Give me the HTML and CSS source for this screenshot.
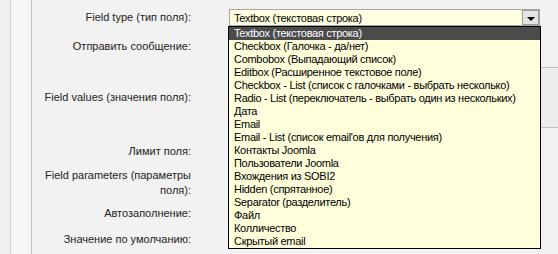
FILE: index.html
```html
<!DOCTYPE html>
<html lang="ru">
<head>
    <meta charset="UTF-8">
    <title>Field settings</title>
    <link rel="stylesheet" href="styles.css">
</head>
<body>
    <div class="page">
        <div class="gutter"></div>
        <div class="strip"></div>

        <!-- Field settings form -->
        <div class="form">
            <div class="row row-type">
                <div class="label">Field type (тип поля):</div>
                <div class="field">
                    <div class="select">
                        <span class="select-text">Textbox (текстовая строка)</span>
                        <span class="select-btn"><span class="arrow"></span></span>
                    </div>
                    <!-- Opened list of the select -->
                    <ul class="dropdown">
                        <li class="active">Textbox (текстовая строка)</li>
                        <li>Checkbox (Галочка - да/нет)</li>
                        <li>Combobox (Выпадающий список)</li>
                        <li>Editbox (Расширенное текстовое поле)</li>
                        <li>Checkbox - List (список с галочками - выбрать несколько)</li>
                        <li>Radio - List (переключатель - выбрать один из нескольких)</li>
                        <li>Дата</li>
                        <li>Email</li>
                        <li>Email - List (список email'ов для получения)</li>
                        <li>Контакты Joomla</li>
                        <li>Пользователи Joomla</li>
                        <li>Вхождения из SOBI2</li>
                        <li>Hidden (спрятанное)</li>
                        <li>Separator (разделитель)</li>
                        <li>Файл</li>
                        <li>Колличество</li>
                        <li>Скрытый email</li>
                    </ul>
                </div>
            </div>
            <div class="row row-send">
                <div class="label">Отправить сообщение:</div>
                <div class="field"><input type="checkbox"></div>
            </div>
            <div class="row row-values">
                <div class="label">Field values (значения поля):</div>
                <div class="field"><div class="textarea"></div></div>
            </div>
            <div class="row row-limit">
                <div class="label">Лимит поля:</div>
                <div class="field"><div class="input"></div></div>
            </div>
            <div class="row row-params">
                <div class="label">Field parameters (параметры поля):</div>
                <div class="field"><div class="input"></div></div>
            </div>
            <div class="row row-auto">
                <div class="label">Автозаполнение:</div>
                <div class="field"><input type="checkbox"></div>
            </div>
            <div class="row row-default">
                <div class="label">Значение по умолчанию:</div>
                <div class="field"><div class="input"></div></div>
            </div>
        </div>
    </div>
</body>
</html>
```

FILE: styles.css
```css
/* Page */
body {
    margin: 0;
    background-color: #f2f2f2;
    font-family: "Liberation Sans", Arial, sans-serif;
    font-size: 11px;
    color: #000;
    overflow: hidden;
}

.page {
    display: flex;
    height: 254px;
}

/* Left edge of the admin panel */
.gutter {
    width: 10px;
    flex-shrink: 0;
    background-color: #efefef;
    border-right: 1px solid #cfcfcf;
}

.strip {
    width: 20px;
    flex-shrink: 0;
    background-color: #f6f6f6;
    border-right: 1px solid #c4c4c4;
}

/* Form rows */
.form {
    flex: 1;
    min-width: 0;
    padding-top: 9px;
    padding-left: 1px;
}

.row {
    display: flex;
    align-items: center;
}

.label {
    width: 158px;
    flex-shrink: 0;
    text-align: right;
    line-height: 15px;
    color: #222;
}

.field {
    margin-left: 38px;
    flex-shrink: 0;
    position: relative;
    display: flex;
    align-items: center;
    height: 100%;
}

.row-type { height: 17px; }
.row-send { height: 18px; margin-top: 11px; }
.row-values { height: 61px; margin-top: 12px; }
.row-limit { height: 18px; margin-top: 14px; }
.row-params { height: 30px; margin-top: 8px; }
.row-auto { height: 18px; margin-top: 6px; }
.row-default { height: 20px; margin-top: 7px; }

.row-params .label {
    padding-left: 2px;
    width: 156px;
}

/* Select box */
.select {
    width: 309px;
    height: 15px;
    border: 1px solid #a5a5a5;
    background-color: #ffffe1;
    display: flex;
    align-items: center;
    justify-content: space-between;
}

.select-text {
    padding-left: 4px;
    letter-spacing: -0.3px;
}

.select-btn {
    width: 15px;
    height: 13px;
    border: 1px solid #9a9a9a;
    background-color: #e4e4e4;
    display: flex;
    align-items: center;
    justify-content: center;
}

.arrow {
    width: 0;
    height: 0;
    border-left: 4px solid transparent;
    border-right: 4px solid transparent;
    border-top: 4px solid #000;
    margin-top: 3px;
}

/* Opened list */
.dropdown {
    position: absolute;
    top: 17px;
    left: -1px;
    width: 311px;
    margin: 0;
    padding: 0;
    list-style: none;
    background-color: #ffffdc;
    border: 1px solid #000;
    z-index: 2;
}

.dropdown li {
    height: 13px;
    line-height: 13px;
    padding-left: 5px;
    letter-spacing: -0.3px;
    white-space: nowrap;
}

.dropdown li.active {
    background-color: #4b4b4b;
    color: #fff;
}

/* Fields hidden behind the list */
.textarea {
    width: 340px;
    height: 59px;
    border: 1px solid #c3c3c3;
    background-color: #ececec;
}

.input {
    width: 150px;
    height: 18px;
    border: 1px solid #c8c8c8;
    background-color: #fff;
}
```
